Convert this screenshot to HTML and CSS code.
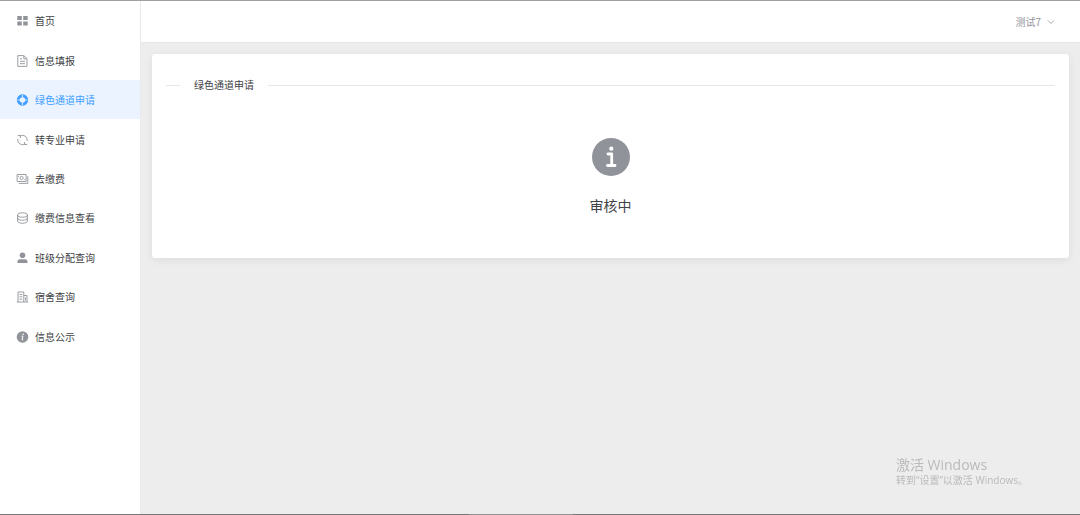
FILE: index.html
```html
<!DOCTYPE html>
<html lang="zh-CN">
<head>
<meta charset="utf-8">
<title>绿色通道申请</title>
<link rel="stylesheet" href="styles.css">
</head>
<body>
<div class="app">
  <nav class="sidebar">
    <ul class="menu">
      <li><a class="menu-item" href="#">
        <svg class="icon" viewBox="0 0 12 12"><path fill="currentColor" d="M.8 1h4.500v4H.8zM6.700 1h4.500v4H6.700zM.8 6.500h4.500v4H.8zM6.700 6.500h4.500v4H6.700z"/></svg>
        <span>首页</span></a></li>
      <li><a class="menu-item" href="#">
        <svg class="icon line" viewBox="0 0 12 12"><path d="M1.300.6h6l3.200 3.100v7.700H1.300zM7.300.8v3h3M3.500 3.800h2M3.500 6.300h5M3.500 8.700h5"/></svg>
        <span>信息填报</span></a></li>
      <li><a class="menu-item active" href="#" aria-current="page">
        <svg class="icon" viewBox="0 0 12 12"><circle cx="6" cy="6" r="4.200" fill="none" stroke="currentColor" stroke-width="3"/><path d="M6 1v2.500M6 8.500V11M1 6h2.500M8.500 6H11" stroke="#eaf3ff" stroke-width=".9"/></svg>
        <span>绿色通道申请</span></a></li>
      <li><a class="menu-item" href="#">
        <svg class="icon line" viewBox="0 0 12 12"><path d="M3.500 2A4.800 4.800 0 0 1 10.700 7M8.500 10A4.800 4.800 0 0 1 1.300 5M1.300 1.500h2.500V4M10.700 10.500H8.200V8"/></svg>
        <span>转专业申请</span></a></li>
      <li><a class="menu-item" href="#">
        <svg class="icon line" viewBox="0 0 12 12"><path d="M.6 1.500h9v7h-9zM2.300 10.400h9V3.200M2 3v.8M8.200 6.200V7"/><circle cx="5.100" cy="5" r="1.600"/></svg>
        <span>去缴费</span></a></li>
      <li><a class="menu-item" href="#">
        <svg class="icon line" viewBox="0 0 12 12"><ellipse cx="6" cy="3" rx="4.900" ry="2.200"/><path d="M1.100 3v6c0 3 9.800 3 9.800 0V3M1.100 6c0 3 9.800 3 9.800 0"/></svg>
        <span>缴费信息查看</span></a></li>
      <li><a class="menu-item" href="#">
        <svg class="icon" viewBox="0 0 12 12"><circle cx="6" cy="3.300" r="2.800" fill="currentColor"/><path fill="currentColor" d="M1 11V9.800Q1 7.200 3.600 7.200h4.800Q11 7.200 11 9.800V11z"/></svg>
        <span>班级分配查询</span></a></li>
      <li><a class="menu-item" href="#">
        <svg class="icon line" viewBox="0 0 12 12"><path d="M.4 11h11.200M1.500 11V1h5.800v10M7.300 4.500h3.200V11M3 3.500h2.800M3 5.800h2.800M3 8.200h2.800M9 6.500v3"/></svg>
        <span>宿舍查询</span></a></li>
      <li><a class="menu-item" href="#">
        <svg class="icon" viewBox="0 0 12 12"><circle cx="6" cy="6" r="5.800" fill="currentColor"/><circle cx="6.800" cy="3.200" r=".8" fill="#fff"/><path d="M5 5.200h1.400L5.500 8.800h1.200" fill="none" stroke="#fff"/></svg>
        <span>信息公示</span></a></li>
    </ul>
  </nav>
  <div class="content">
    <header class="topbar">
      <button class="user" type="button">测试7
        <svg class="chevron" viewBox="0 0 8 8"><path d="M1 2.500l3 3 3-3" fill="none" stroke="currentColor" stroke-width=".8"/></svg>
      </button>
    </header>
    <main class="main">
      <section class="card">
        <h1 class="divider">绿色通道申请</h1>
        <div class="result">
          <svg class="result-icon" viewBox="0 0 38 38"><circle cx="19" cy="19" r="19" fill="#909399"/><circle cx="19.300" cy="10.700" r="2.100" fill="#fff"/><path d="M16 16h3.700v11.500M15.500 27.500h7.500" fill="none" stroke="#fff" stroke-width="2.800" stroke-linecap="round" stroke-linejoin="round"/></svg>
          <p class="result-title">审核中</p>
        </div>
      </section>
    </main>
  </div>
</div>
<aside class="watermark">
  <p class="watermark-title">激活 Windows</p>
  <p class="watermark-text">转到“设置”以激活 Windows。</p>
</aside>
<div class="taskbar"><span></span></div>
</body>
</html>
```
FILE: styles.css
```css
* { box-sizing: border-box; }

body {
  margin: 0;
  background: #ededed;
  color: #404246;
  font: 10px/14px "Noto Sans CJK SC", sans-serif;
}

h1, p, ul { margin: 0; padding: 0; font-weight: 400; }

.app {
  display: flex;
  min-height: 100vh;
  border-top: 1px solid #a0a0a0;
}

.sidebar {
  flex: 0 0 141px;
  background: #fff;
  border-right: 1px solid #e9e9e9;
}

.menu {
  display: grid;
  grid-auto-rows: 1fr;
  height: 355px;
  list-style: none;
}

.menu-item {
  display: flex;
  align-items: center;
  gap: 6px;
  height: 100%;
  padding-top: 1px;
  padding-left: 16px;
  color: inherit;
  text-decoration: none;
}

.menu-item.active { background: #eaf3ff; color: #409eff; }

.icon { width: 13px; height: 12px; color: #909399; }
.active .icon { color: #409eff; }
.line { fill: none; stroke: currentColor; stroke-width: 0.9; }

.content { flex: 1; min-width: 0; }

.topbar {
  display: flex;
  align-items: center;
  justify-content: flex-end;
  height: 42px;
  padding-right: 25px;
  background: #fff;
  border-bottom: 1px solid #e6e6e6;
}

.user {
  display: flex;
  align-items: center;
  gap: 6px;
  padding: 0;
  border: 0;
  background: none;
  color: #909399;
  font: inherit;
}

.chevron { width: 8px; height: 8px; }

.main { padding: 11px; }

.card {
  padding: 24px 14px 42px;
  border-radius: 3px;
  background: #fff;
  box-shadow: 0 2px 8px rgba(0, 0, 0, 0.07);
}

.divider {
  display: flex;
  align-items: center;
  gap: 14px;
  font-size: 10px;
  line-height: 14px;
}

.divider::before,
.divider::after { content: ""; height: 1px; background: #e6e6e6; }
.divider::before { width: 14px; }
.divider::after { flex: 1; }

.result {
  display: flex;
  flex-direction: column;
  align-items: center;
  gap: 18px;
  padding-top: 46px;
}

.result-icon { width: 38px; height: 38px; }
.result-title { font-size: 14px; line-height: 22px; }

.watermark {
  position: fixed;
  right: 52px;
  bottom: 28px;
  color: #bababa;
  font-family: "Open Sans", "Noto Sans CJK SC", sans-serif;
}

.watermark-title { font-size: 14px; line-height: 16px; }
.watermark-text { font-size: 10px; line-height: 14px; }

.taskbar {
  position: fixed;
  right: 0;
  bottom: 0;
  left: 0;
  display: flex;
  justify-content: center;
  height: 1px;
  background: #777;
}

.taskbar span { width: 104px; margin-right: 38px; background: #929292; }
```
